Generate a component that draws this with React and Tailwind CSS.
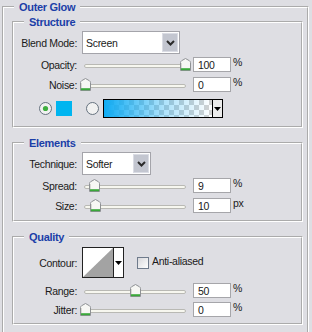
import React from "react";

const Thumb = () => (
  <svg width="11" height="13" viewBox="0 0 11 13">
    <path d="M0.5 4.5 Q0.5 3.5 1.5 2.8 L5.5 0.5 L9.5 2.8 Q10.5 3.5 10.5 4.5 V12.5 H0.5 Z" fill="#f7f7f4" stroke="#8e9194" />
    <path d="M1 11.2 H10" stroke="#3aa83a" strokeWidth="2" />
    <path d="M1.5 5 V10" stroke="#d9d9d4" strokeWidth="1" />
  </svg>
);

const Slider = ({ v }) => (
  <div className="relative ml-[3px] flex h-[15px] w-[110px] shrink-0 items-center px-[4px]">
    <div className="mt-[2px] h-[4px] flex-1 rounded-full border border-[#b9b9b4] bg-[#f7f7ef]" />
    <div className="absolute top-[1px]" style={{ left: v }}>
      <Thumb />
    </div>
  </div>
);

const NumInput = ({ value, unit }) => (
  <>
    <div className="ml-[3px] flex h-[15px] w-[38px] shrink-0 items-center border border-[#a6a6aa] bg-white pl-[4px]">
      {value}
    </div>
    <span className="ml-[2px] -mt-[5px]">{unit}</span>
  </>
);

const Chevron = () => (
  <svg width="9" height="6" viewBox="0 0 9 6">
    <path d="M1 1 L4.5 4.5 L8 1" stroke="#2a2a2a" strokeWidth="2" fill="none" />
  </svg>
);

const Select = ({ w, value }) => (
  <div className={`ml-[5px] flex h-[23px] shrink-0 border border-[#a4a4aa] bg-white p-[1px] ${w}`}>
    <span className="flex-1 self-center pl-[2px]">{value}</span>
    <div className="flex w-[16px] items-center justify-center border border-[#dadce4] bg-[#c3c6d0]">
      <Chevron />
    </div>
  </div>
);

const Label = ({ children }) => (
  <span className="w-[63px] shrink-0 text-right">{children}</span>
);

const Radio = ({ checked }) => (
  <svg width="13" height="13" viewBox="0 0 13 13" className="shrink-0">
    <circle cx="6.5" cy="6.5" r="6" fill="#f1f1f1" stroke="#66727f" />
    {checked && <circle cx="6.5" cy="6.5" r="2.6" fill="#3fae3f" />}
  </svg>
);

const DownTri = () => (
  <svg width="7" height="4" viewBox="0 0 7 4">
    <path d="M0 0 H7 L3.5 4 Z" fill="#000" />
  </svg>
);

const Legend = ({ children, outer }) => (
  <legend className={`${outer ? "ml-[2px]" : "ml-[10px]"} px-[5px] text-[11px] font-bold text-[#1b3ea8]`}>
    {children}
  </legend>
);

export default function App() {
  return (
    <div className="h-[332px] w-[312px] overflow-hidden bg-[#dedee3] text-[10.5px] leading-[14px] tracking-[-0.3px] text-[#1a1a1a] [font-family:'Liberation_Sans',Arial,sans-serif]">
      <fieldset className="ml-[2px] w-[307px] min-w-0 border-2 border-white pb-[12px] pl-[8px] pr-[4px] pt-[1px] [border-style:groove]">
        <Legend outer>Outer Glow</Legend>

        <fieldset className="w-[291px] min-w-0 border-2 border-white pb-[8px] pt-[2px] [border-style:groove]">
          <Legend>Structure</Legend>
          <div className="flex h-[23px] items-center">
            <Label>Blend Mode:</Label>
            <Select w="w-[98px]" value="Screen" />
          </div>
          <div className="mt-[3px] flex h-[15px] items-center">
            <Label>Opacity:</Label>
            <Slider v={100} />
            <NumInput value="100" unit="%" />
          </div>
          <div className="mt-[5px] flex h-[15px] items-center">
            <Label>Noise:</Label>
            <Slider v={0} />
            <NumInput value="0" unit="%" />
          </div>
          <div className="mt-[7px] flex h-[19px] items-center pl-[25px]">
            <Radio checked />
            <div className="ml-[4px] h-[15px] w-[16px] bg-[#00b5f0]" />
            <div className="ml-[14px] flex">
              <Radio />
            </div>
            <div className="ml-[4px] flex h-[19px] w-[120px] border border-black">
              <div className="flex-1 bg-[conic-gradient(#d2d2d2_25%,#ffffff_0_50%,#d2d2d2_0_75%,#ffffff_0)] bg-[length:10px_10px]">
                <div className="h-full bg-[linear-gradient(to_right,#10acf4,rgba(16,172,244,0.35)_55%,rgba(16,172,244,0))]" />
              </div>
              <div className="flex w-[10px] items-center justify-center border-l border-black bg-[#ececec]">
                <DownTri />
              </div>
            </div>
          </div>
        </fieldset>

        <fieldset className="mt-[8px] w-[291px] min-w-0 border-2 border-white pb-[7px] pt-[2px] [border-style:groove]">
          <Legend>Elements</Legend>
          <div className="flex h-[23px] items-center">
            <Label>Technique:</Label>
            <Select w="w-[69px]" value="Softer" />
          </div>
          <div className="mt-[3px] flex h-[15px] items-center">
            <Label>Spread:</Label>
            <Slider v={9} />
            <NumInput value="9" unit="%" />
          </div>
          <div className="mt-[5px] flex h-[15px] items-center">
            <Label>Size:</Label>
            <Slider v={10} />
            <NumInput value="10" unit="px" />
          </div>
        </fieldset>

        <fieldset className="mt-[8px] w-[291px] min-w-0 border-2 border-white pb-[6px] pt-[3px] [border-style:groove]">
          <Legend>Quality</Legend>
          <div className="flex h-[31px] items-center">
            <Label>Contour:</Label>
            <div className="ml-[5px] flex h-[31px] w-[42px] shrink-0 border border-[#222] bg-white">
              <svg width="30" height="29" viewBox="0 0 30 29" className="shrink-0">
                <polygon points="0,29 30,0 30,29" fill="#a3a3a3" />
              </svg>
              <div className="flex flex-1 items-center justify-center border-l border-[#222]">
                <DownTri />
              </div>
            </div>
            <div className="ml-[13px] h-[12px] w-[12px] shrink-0 border border-[#6f7b8c] bg-[linear-gradient(135deg,#d8d8dc,#ffffff)]" />
            <span className="ml-[3px] -mt-[3px]">Anti-aliased</span>
          </div>
          <div className="mt-[5px] flex h-[15px] items-center">
            <Label>Range:</Label>
            <Slider v={50} />
            <NumInput value="50" unit="%" />
          </div>
          <div className="mt-[4px] flex h-[15px] items-center">
            <Label>Jitter:</Label>
            <Slider v={0} />
            <NumInput value="0" unit="%" />
          </div>
        </fieldset>
      </fieldset>
    </div>
  );
}
